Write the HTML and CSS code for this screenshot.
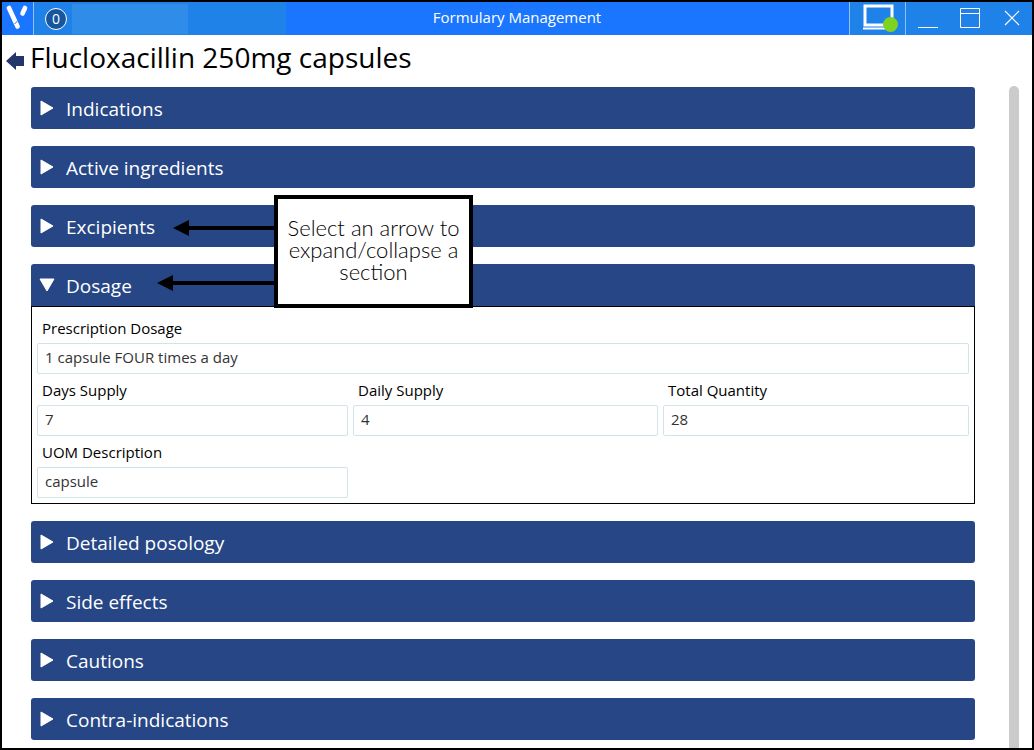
FILE: index.html
```
<!DOCTYPE html>
<html lang="en">
<head>
    <meta charset="UTF-8">
    <meta name="viewport" content="width=device-width, initial-scale=1.0">
    <title>Formulary Management</title>
    <link rel="stylesheet" href="styles.css">
</head>
<body>
    <div class="window">
        <!-- title bar -->
        <header class="titlebar">
            <div class="bar-left">
                <div class="logo">
                    <svg width="24" height="28" viewBox="0 0 24 28">
                        <path d="M3 4 L11.500 22.500" stroke="#fff" stroke-width="4.600" stroke-linecap="round"/>
                        <path d="M19 4 L16.500 9.500" stroke="#fff" stroke-width="4.600" stroke-linecap="round"/>
                        <path d="M8.500 20 L12 16.500" stroke="#1a75ff" stroke-width="1"/>
                    </svg>
                </div>
                <div class="user">
                    <span class="count">0</span>
                    <span class="user-name"></span>
                </div>
            </div>
            <div class="bar-title">Formulary Management</div>
            <div class="bar-right">
                <button class="status" type="button" aria-label="Connection status">
                    <svg width="36" height="28" viewBox="0 0 36 28">
                        <rect x="2" y="2" width="27" height="19" fill="none" stroke="#fff" stroke-width="3"/>
                        <path d="M0 24.500 H28" stroke="#fff" stroke-width="2"/>
                        <circle cx="27.500" cy="20.500" r="7.500" fill="#7ed321"/>
                    </svg>
                </button>
                <button class="win-btn" type="button" aria-label="Minimise">
                    <svg width="20" height="20" viewBox="0 0 20 20"><path d="M0 19.500 H20" stroke="#fff"/></svg>
                </button>
                <button class="win-btn" type="button" aria-label="Maximise">
                    <svg width="20" height="20" viewBox="0 0 20 20"><path d="M0.500 0.500 H19.500 V19.500 H0.500 Z M0.500 5.500 H19.500" fill="none" stroke="#fff"/></svg>
                </button>
                <button class="win-btn" type="button" aria-label="Close">
                    <svg width="20" height="20" viewBox="0 0 20 20"><path d="M3 3 L17 17 M17 3 L3 17" stroke="#fff" stroke-width="1.200"/></svg>
                </button>
            </div>
        </header>

        <!-- drug name -->
        <div class="heading">
            <a class="back" href="#" aria-label="Back">
                <svg width="18" height="18" viewBox="0 0 18 18"><path d="M0 9 L10 0 V4 H18 V14 H10 V18 Z" fill="#23366b"/></svg>
            </a>
            <h1>Flucloxacillin 250mg capsules</h1>
        </div>

        <div class="content">
            <main class="sections">
                <section class="section">
                    <h2><button class="toggle" type="button" aria-expanded="false"><svg class="arrow" width="16" height="16" viewBox="0 0 16 16"><path d="M2 1 L14 8 L2 15 Z"/></svg>Indications</button></h2>
                </section>
                <section class="section">
                    <h2><button class="toggle" type="button" aria-expanded="false"><svg class="arrow" width="16" height="16" viewBox="0 0 16 16"><path d="M2 1 L14 8 L2 15 Z"/></svg>Active ingredients</button></h2>
                </section>
                <section class="section">
                    <h2><button class="toggle" type="button" aria-expanded="false"><svg class="arrow" width="16" height="16" viewBox="0 0 16 16"><path d="M2 1 L14 8 L2 15 Z"/></svg>Excipients</button></h2>
                    <!-- help note over the sections -->
                    <div class="callout">
                        <svg width="118" height="113" viewBox="0 0 118 113">
                            <path d="M30 33 H118 M14 88 H118" stroke="#000" stroke-width="4"/>
                            <path d="M16 33 L32 25 V41 Z M0 88 L16 80 V96 Z"/>
                        </svg>
                        <p>Select an arrow to expand/collapse a section</p>
                    </div>
                </section>
                <section class="section">
                    <h2><button class="toggle" type="button" aria-expanded="true" aria-controls="dosage"><svg class="arrow" width="16" height="16" viewBox="0 0 16 16"><path d="M2 1 L14 8 L2 15 Z"/></svg>Dosage</button></h2>
                    <div class="panel" id="dosage">
                        <div class="field wide">
                            <label for="prescription">Prescription Dosage</label>
                            <input id="prescription" type="text" value="1 capsule FOUR times a day">
                        </div>
                        <div class="field">
                            <label for="days">Days Supply</label>
                            <input id="days" type="text" value="7">
                        </div>
                        <div class="field">
                            <label for="daily">Daily Supply</label>
                            <input id="daily" type="text" value="4">
                        </div>
                        <div class="field">
                            <label for="total">Total Quantity</label>
                            <input id="total" type="text" value="28">
                        </div>
                        <div class="field">
                            <label for="uom">UOM Description</label>
                            <input id="uom" type="text" value="capsule">
                        </div>
                    </div>
                </section>
                <section class="section">
                    <h2><button class="toggle" type="button" aria-expanded="false"><svg class="arrow" width="16" height="16" viewBox="0 0 16 16"><path d="M2 1 L14 8 L2 15 Z"/></svg>Detailed posology</button></h2>
                </section>
                <section class="section">
                    <h2><button class="toggle" type="button" aria-expanded="false"><svg class="arrow" width="16" height="16" viewBox="0 0 16 16"><path d="M2 1 L14 8 L2 15 Z"/></svg>Side effects</button></h2>
                </section>
                <section class="section">
                    <h2><button class="toggle" type="button" aria-expanded="false"><svg class="arrow" width="16" height="16" viewBox="0 0 16 16"><path d="M2 1 L14 8 L2 15 Z"/></svg>Cautions</button></h2>
                </section>
                <section class="section">
                    <h2><button class="toggle" type="button" aria-expanded="false"><svg class="arrow" width="16" height="16" viewBox="0 0 16 16"><path d="M2 1 L14 8 L2 15 Z"/></svg>Contra-indications</button></h2>
                </section>
            </main>
            <div class="scrollbar"></div>
        </div>
    </div>
    <script>
        var toggles = document.getElementsByClassName('toggle');
        for(var i=0;i<toggles.length;i++){
            toggles[i].onclick = function(){
                var open = this.getAttribute('aria-expanded') == 'true';
                this.setAttribute('aria-expanded', !open);
                var panel = document.getElementById(this.getAttribute('aria-controls'));
                if(panel){
                    panel.hidden = open;
                }
            }
        }
    </script>
</body>
</html>
```
FILE: styles.css
```
*{
    margin: 0;
    padding: 0;
    box-sizing: border-box;
}
body{
    font-family: "Open Sans", "Noto Sans", sans-serif;
    font-size: 15px;
    color: #000;
    background-color: #fff;
}
button, input{
    font: inherit;
    border: none;
}
svg{
    display: block;
    flex: none;
}
.window{
    display: flex;
    flex-direction: column;
    min-height: 100vh;
    border: 2px solid #000;
}
/* title bar */
.titlebar{
    display: grid;
    grid-template-columns: 1fr auto 1fr;
    height: 33px;
    color: #fff;
    background-color: #1a75ff;
}
.bar-left{
    display: flex;
}
.logo{
    width: 31px;
    padding: 2px 4px;
}
.user{
    display: flex;
    align-items: center;
    width: 253px;
    padding-left: 11px;
    border-left: 1px solid #8fc0f8;
    background-color: #1e82e8;
}
.count{
    width: 22px;
    height: 22px;
    margin-right: 5px;
    border: 1px solid #fff;
    border-radius: 50%;
    font-size: 14px;
    line-height: 20px;
    text-align: center;
    background-color: #17559d;
}
.user-name{
    width: 116px;
    height: 30px;
    background-color: #308ce9;
}
.bar-title{
    line-height: 30px;
}
.bar-right{
    display: flex;
    justify-self: end;
    background-color: #1e82e8;
}
.bar-right button{
    display: flex;
    align-items: center;
    justify-content: center;
    padding-bottom: 1px;
    background: none;
}
.bar-right .status{
    width: 57px;
    padding-left: 7px;
    border-left: 1px solid #8fc0f8;
    border-right: 1px solid #8fc0f8;
}
.bar-right .win-btn{
    width: 42px;
    padding-left: 2px;
}
/* drug name */
.heading{
    display: flex;
    align-items: center;
    height: 51px;
    padding-left: 4px;
}
.back{
    margin-right: 6px;
}
h1{
    font-size: 28px;
    font-weight: normal;
    line-height: 45px;
    padding-bottom: 6px;
}
.content{
    display: flex;
    flex: 1;
    padding: 0 13px 0 29px;
}
.sections{
    display: flex;
    flex-direction: column;
    flex: 1;
    gap: 17px;
    padding: 1px 0 8px;
}
.section{
    position: relative;
}
.toggle{
    display: flex;
    align-items: flex-start;
    gap: 11px;
    width: 100%;
    height: 42px;
    padding: 0 8px;
    border-radius: 3px;
    font-size: 19px;
    font-weight: normal;
    line-height: 45px;
    color: #fff;
    background-color: #264685;
}
.arrow{
    margin-top: 13px;
    fill: #fff;
    stroke: #fff;
    stroke-linejoin: round;
}
.toggle[aria-expanded="true"]{
    border-radius: 3px 3px 0 0;
}
.toggle[aria-expanded="true"] .arrow{
    transform: rotate(90deg);
}
/* dosage form */
.panel{
    display: grid;
    grid-template-columns: 311fr 305fr 306fr;
    column-gap: 5px;
    padding: 5px;
    border: 1px solid #000;
}
.panel[hidden]{
    display: none;
}
.wide{
    grid-column: 1 / -1;
}
.field label{
    display: block;
    height: 31px;
    padding-left: 5px;
    line-height: 33px;
}
.field input{
    display: block;
    width: 100%;
    height: 31px;
    padding: 0 7px 4px;
    border: 1px solid #d0e4ea;
    border-radius: 2px;
    color: #333;
}
/* help note */
.callout{
    position: absolute;
    top: -10px;
    left: 126px;
    z-index: 1;
    display: flex;
}
.callout p{
    display: flex;
    align-items: center;
    width: 199px;
    margin-left: -1px;
    padding-bottom: 4px;
    border: 4px solid #000;
    font-family: Lato, sans-serif;
    font-size: 22px;
    font-weight: 300;
    line-height: 22px;
    text-align: center;
    background-color: #fff;
}
.scrollbar{
    width: 10px;
    margin-left: 34px;
    border-radius: 5px 5px 0 0;
    background-color: #cbcbcb;
}
```
